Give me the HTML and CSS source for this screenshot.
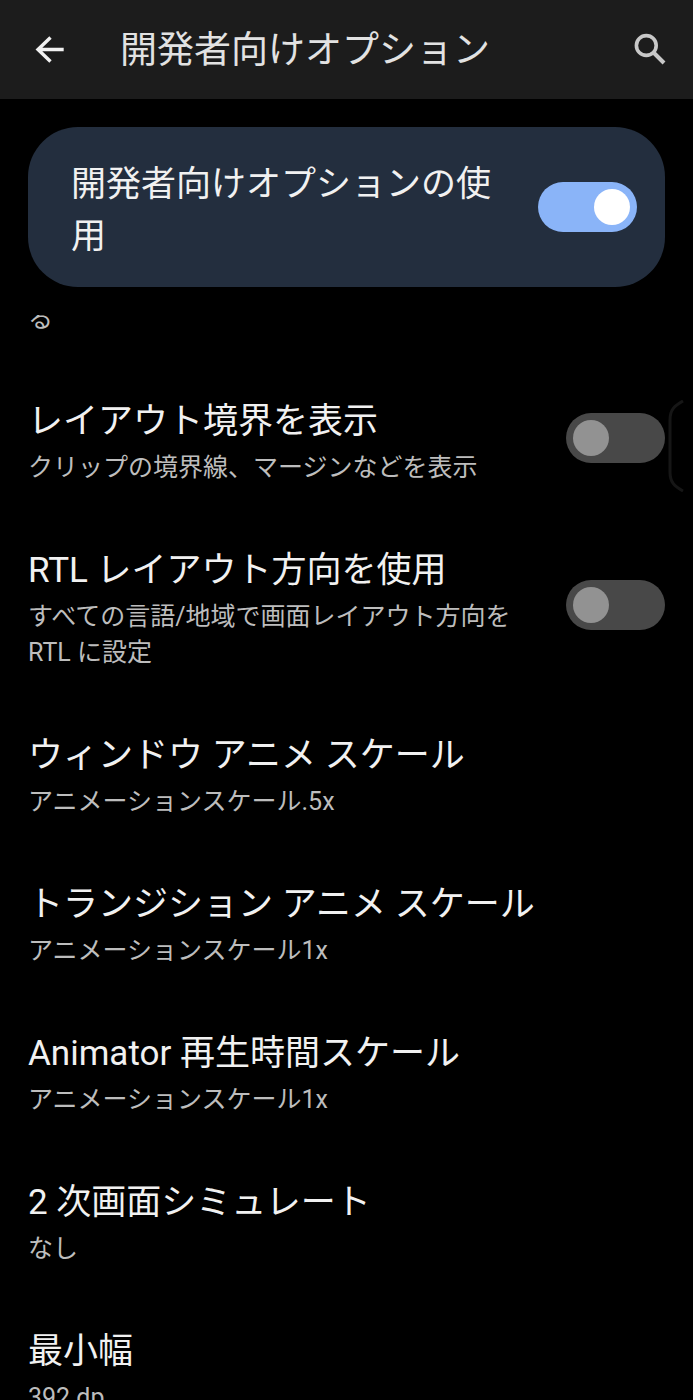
FILE: index.html
```
<!DOCTYPE html>
<html lang="ja">
<head>
    <meta charset="UTF-8">
    <meta name="viewport" content="width=device-width, initial-scale=1.0">
    <title>開発者向けオプション</title>
    <link rel="stylesheet" href="styles.css">
</head>
<body>
    <!-- App bar -->
    <header class="app-bar">
        <button class="icon-button" type="button" aria-label="戻る">
            <svg class="icon" viewBox="0 0 42 42">
                <path d="M35.700 20.500H11M22.500 8.500L10 20.500L22.500 32.500" fill="none" stroke="#f1f1f1" stroke-width="3.4"/>
            </svg>
        </button>
        <h1>開発者向けオプション</h1>
        <button class="icon-button" type="button" aria-label="検索">
            <svg class="icon" viewBox="0 0 42 42">
                <circle cx="16.300" cy="16.500" r="9.900" fill="none" stroke="#c8c8c8" stroke-width="3.600"/>
                <path d="M23.500 23.500L34 34" fill="none" stroke="#c8c8c8" stroke-width="4"/>
            </svg>
        </button>
    </header>

    <!-- Main switch -->
    <label class="main-switch">
        <span class="title">開発者向けオプションの使用</span>
        <input class="switch" type="checkbox" role="switch" checked>
    </label>

    <!-- Scrolling list of settings -->
    <main class="settings">
        <div class="settings-list">
            <p class="summary previous">る</p>

            <label class="row">
                <span class="row-text">
                    <span class="title">レイアウト境界を表示</span>
                    <span class="summary">クリップの境界線、マージンなどを表示</span>
                </span>
                <input class="switch" type="checkbox" role="switch">
            </label>

            <label class="row">
                <span class="row-text">
                    <span class="title">RTL レイアウト方向を使用</span>
                    <span class="summary">すべての言語/地域で画面レイアウト方向を RTL に設定</span>
                </span>
                <input class="switch" type="checkbox" role="switch">
            </label>

            <button class="row" type="button">
                <span class="row-text">
                    <span class="title">ウィンドウ アニメ スケール</span>
                    <span class="summary">アニメーションスケール.5x</span>
                </span>
            </button>

            <button class="row" type="button">
                <span class="row-text">
                    <span class="title">トランジション アニメ スケール</span>
                    <span class="summary">アニメーションスケール1x</span>
                </span>
            </button>

            <button class="row" type="button">
                <span class="row-text">
                    <span class="title">Animator 再生時間スケール</span>
                    <span class="summary">アニメーションスケール1x</span>
                </span>
            </button>

            <button class="row" type="button">
                <span class="row-text">
                    <span class="title">2 次画面シミュレート</span>
                    <span class="summary">なし</span>
                </span>
            </button>

            <button class="row" type="button">
                <span class="row-text">
                    <span class="title">最小幅</span>
                    <span class="summary">392 dp</span>
                </span>
            </button>
        </div>
    </main>

    <!-- Edge panel handle -->
    <svg class="edge-handle" viewBox="0 0 16 92" aria-hidden="true">
        <path d="M15 1C6 6 2 10 2 20V72C2 82 6 86 15 91" fill="none" stroke="#161616" stroke-width="3"/>
    </svg>
</body>
</html>
```
FILE: styles.css
```
* {
    box-sizing: border-box;
}

body {
    margin: 0;
    height: 100vh;
    display: flex;
    flex-direction: column;
    overflow: hidden;
    background: #000;
    color: #f1f1f1;
    font-family: Roboto, "Noto Sans CJK JP", sans-serif;
}

button {
    border: none;
    background: none;
    color: inherit;
    font-family: inherit;
    text-align: left;
    cursor: pointer;
}

/* App bar */
.app-bar {
    flex: none;
    display: flex;
    align-items: center;
    padding: 22px 21px 22px 28px;
    background: #1c1c1c;
}

.app-bar h1 {
    flex: 1;
    margin: 0 0 0 50px;
    padding-top: 3px;
    color: #e2e2e2;
    font-size: 37px;
    font-weight: 400;
    line-height: 52px;
}

.icon-button {
    padding: 0;
}

.icon {
    display: block;
    width: 42px;
    height: 42px;
}

/* Main switch card */
.main-switch {
    flex: none;
    display: flex;
    align-items: center;
    gap: 28px;
    margin: 28px;
    padding: 24px 28px 24px 43px;
    border-radius: 50px;
    background: #232e3e;
    cursor: pointer;
}

.main-switch .title {
    flex: 1;
    padding-top: 8px;
}

/* Settings list */
.settings {
    flex: 1;
    min-height: 0;
    overflow: hidden;
}

/* List is scrolled part of the way past its previous entry */
.settings-list {
    margin-top: -14px;
}

.previous {
    margin: 0;
    padding: 0 28px 26px;
}

.row {
    width: 100%;
    display: flex;
    align-items: center;
    gap: 28px;
    padding: 26px 28px;
    cursor: pointer;
}

.row-text {
    flex: 1;
    display: flex;
    flex-direction: column;
    gap: 2px;
    padding-top: 7px;
}

.title {
    font-size: 35px;
    line-height: 52px;
}

.summary {
    color: #bdbdbd;
    font-size: 25px;
    line-height: 36px;
}

/* Toggle */
.switch {
    appearance: none;
    flex: none;
    display: flex;
    width: 99px;
    height: 50px;
    margin: 0;
    padding: 7px;
    border-radius: 25px;
    background: #484848;
    cursor: pointer;
}

.switch::before {
    content: "";
    width: 36px;
    height: 36px;
    border-radius: 50%;
    background: #929292;
}

.switch:checked {
    justify-content: flex-end;
    background: #8ab4f8;
}

.switch:checked::before {
    background: #fff;
}

/* Floats over the right edge of the screen */
.edge-handle {
    position: fixed;
    top: 400px;
    right: 9px;
    width: 16px;
    height: 92px;
    pointer-events: none;
}
```
